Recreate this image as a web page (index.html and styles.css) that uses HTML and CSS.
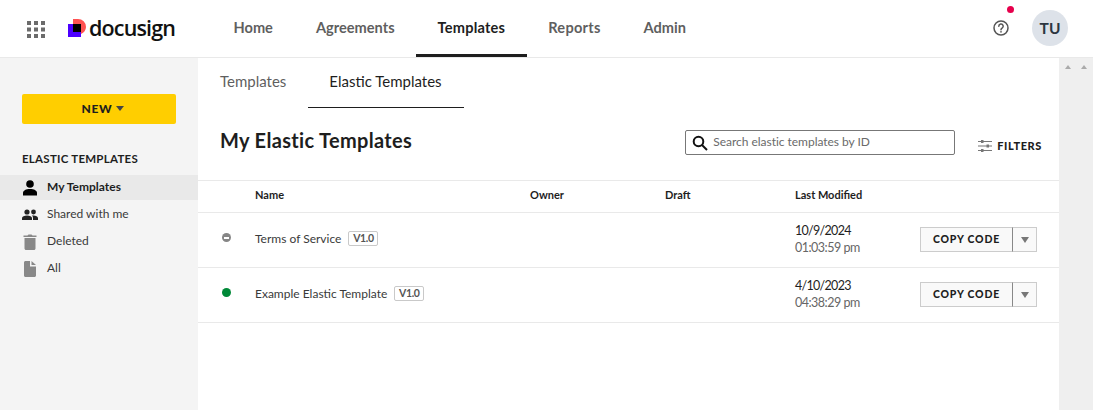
FILE: index.html
```html
<!DOCTYPE html>
<html lang="en">
<head>
<meta charset="utf-8">
<title>Elastic Templates</title>
<link rel="stylesheet" href="styles.css">
</head>
<body>
<header class="topbar">
  <svg class="apps" width="18" height="18" viewBox="0 0 18 18" fill="#6b6b6b"><rect x="0" y="1" width="4" height="4"/><rect x="7" y="1" width="4" height="4"/><rect x="14" y="1" width="4" height="4"/><rect x="0" y="7.500" width="4" height="4"/><rect x="7" y="7.500" width="4" height="4"/><rect x="14" y="7.500" width="4" height="4"/><rect x="0" y="14" width="4" height="4"/><rect x="7" y="14" width="4" height="4"/><rect x="14" y="14" width="4" height="4"/></svg>
  <div class="logo">
    <svg width="18" height="18" viewBox="0 0 18 18"><path d="M5 0h5a8 8 0 0 1 8 8 8 8 0 0 1-5 7V5H5z" fill="#ff5252"/><rect x="0" y="5" width="13" height="13" fill="#4c00ff"/><rect x="5" y="5" width="8" height="8" fill="#000"/></svg>
    <span class="wordmark">docusign</span>
  </div>
  <nav class="mainnav">
    <a class="navitem">Home</a>
    <a class="navitem">Agreements</a>
    <a class="navitem active">Templates</a>
    <a class="navitem wide">Reports</a>
    <a class="navitem">Admin</a>
  </nav>
  <div class="help">
    <svg width="18" height="18" viewBox="0 0 18 18" fill="none" stroke="#555" stroke-width="1.500"><circle cx="9" cy="9" r="7"/><path d="M6.800 7.200a2.200 2.200 0 1 1 3.300 1.900c-.8.500-1.100.9-1.100 1.700" stroke-linecap="round"/><circle cx="9" cy="12.800" r=".6" fill="#555" stroke-width=".6"/></svg>
    <span class="dot"></span>
  </div>
  <div class="avatar">TU</div>
</header>
<div class="body">
  <aside class="sidebar">
    <button class="newbtn">NEW <span class="caret"></span></button>
    <h2 class="sidehead">ELASTIC TEMPLATES</h2>
    <ul class="sidelist">
      <li class="sideitem current">
        <svg width="16" height="16" viewBox="0 0 16 16" fill="#000"><circle cx="8" cy="4" r="3.800"/><path d="M1 15.500v-2.500c0-2.500 3-4 7-4s7 1.500 7 4v2.500z"/></svg>
        My Templates
      </li>
      <li class="sideitem">
        <svg width="16" height="16" viewBox="0 0 16 16" fill="#222"><circle cx="5" cy="5" r="2.600"/><circle cx="11.500" cy="5" r="2.400"/><path d="M0 13v-1.800C0 9.500 2.300 8.500 5 8.500s5 1 5 2.700V13z"/><path d="M11 13v-2c0-1-.4-1.800-1.100-2.400.5-.1 1-.1 1.600-.1 2.400 0 4.500 1 4.500 2.700V13z"/></svg>
        Shared with me
      </li>
      <li class="sideitem">
        <svg width="16" height="16" viewBox="0 0 16 16" fill="#888"><path d="M1.500 1.500h4L6.500 .5h3l1 1h4V3h-13z"/><path d="M2.500 4h11v10.500c0 .8-.7 1.500-1.500 1.500H4c-.8 0-1.500-.7-1.500-1.500z"/></svg>
        Deleted
      </li>
      <li class="sideitem">
        <svg width="16" height="16" viewBox="0 0 16 16" fill="#888"><path d="M2 1.500C2 .7 2.700 0 3.500 0H8v5.500h6v9c0 .8-.7 1.500-1.500 1.500h-9C2.700 16 2 15.300 2 14.500z"/><path d="M9.500 0l4.500 4H9.500z"/></svg>
        All
      </li>
    </ul>
  </aside>
  <main class="content">
    <div class="tabs">
      <a class="tab">Templates</a>
      <a class="tab selected">Elastic Templates</a>
    </div>
    <div class="titlerow">
      <h1 class="title">My Elastic Templates</h1>
      <div class="search">
        <svg width="16" height="16" viewBox="0 0 16 16" fill="none" stroke="#111" stroke-width="2"><circle cx="6.500" cy="6.500" r="4.800"/><path d="M10 10l5 5"/></svg>
        <span class="placeholder">Search elastic templates by ID</span>
      </div>
      <div class="filters">
        <svg width="14" height="14" viewBox="0 0 14 14" fill="#777"><rect x="0" y="2" width="14" height="1"/><rect x="0" y="6.500" width="14" height="1"/><rect x="0" y="11" width="14" height="1"/><rect x="3" y="1" width="2.500" height="3"/><rect x="8.500" y="5.500" width="2.500" height="3"/><rect x="3" y="10" width="2.500" height="3"/></svg>
        FILTERS
      </div>
    </div>
    <div class="row headrow">
      <span class="cname">Name</span>
      <span class="cowner">Owner</span>
      <span class="cdraft">Draft</span>
      <span class="cmod">Last Modified</span>
    </div>
    <div class="row datarow">
      <span class="status paused"></span>
      <span class="cname"><span>Terms of Service</span><span class="ver">V1.0</span></span>
      <span class="cowner"></span>
      <span class="cdraft"></span>
      <span class="cmod"><span class="date">10/9/2024</span><span class="time">01:03:59 pm</span></span>
      <div class="split"><button class="copy">COPY CODE</button><button class="more"><span class="caret"></span></button></div>
    </div>
    <div class="row datarow">
      <span class="status live"></span>
      <span class="cname"><span>Example Elastic Template</span><span class="ver">V1.0</span></span>
      <span class="cowner"></span>
      <span class="cdraft"></span>
      <span class="cmod"><span class="date">4/10/2023</span><span class="time">04:38:29 pm</span></span>
      <div class="split"><button class="copy">COPY CODE</button><button class="more"><span class="caret"></span></button></div>
    </div>
  </main>
  <div class="rail"><span class="up"></span><span class="up"></span></div>
</div>
</body>
</html>
```
FILE: styles.css
```css
* { box-sizing: border-box; }
html, body { margin: 0; height: 100%; overflow: hidden; }
body { font-family: Lato, "Liberation Sans", sans-serif; color: #1e1e1e; background: #fff; }
button { font-family: inherit; }

.topbar { height: 58px; display: flex; align-items: center; border-bottom: 1px solid #e9e9e9; padding: 0 0 1px 27px; }
.apps { flex: none; margin-top: 1px; }
.logo { display: flex; align-items: center; margin-left: 23px; width: 144px; }
.wordmark { font-family: "Open Sans", sans-serif; font-size: 21.500px; font-weight: 600; letter-spacing: -.85px; color: #111; margin-left: 3px; line-height: 1; }
.mainnav { display: flex; height: 57px; margin-bottom: -1px; }
.navitem { display: flex; align-items: center; padding: 0 21.500px 3px; font-size: 14.600px; font-weight: 700; color: #5f5f5f; }
.navitem.active { color: #1e1e1e; letter-spacing: .2px; border-bottom: 3px solid #1e1e1e; padding-bottom: 0; }
.navitem.wide { letter-spacing: .25px; }
.help { position: relative; margin-left: auto; width: 18px; height: 18px; margin-right: 22px; }
.dot { position: absolute; top: -13px; left: 15px; width: 7px; height: 7px; border-radius: 50%; background: #e6004c; }
.avatar { width: 36px; height: 36px; margin-right: 25px; border-radius: 50%; background: #dde2e9; display: flex; align-items: center; justify-content: center; font-size: 15.500px; font-weight: 700; color: #2c3640; }

.body { display: flex; height: 352px; }
.sidebar { width: 198px; flex: none; background: #f4f4f4; padding-top: 36px; }
.newbtn { display: flex; align-items: center; justify-content: center; gap: 4px; width: 154px; height: 30px; margin: 0 0 0 22px; padding: 0 0 1px 8px; border: 0; border-radius: 2px; background: #ffce00; font-size: 12px; font-weight: 900; letter-spacing: .7px; color: #1e1e1e; }
.caret { display: inline-block; width: 0; height: 0; border-left: 3.500px solid transparent; border-right: 3.500px solid transparent; border-top: 5px solid #444; }
.newbtn .caret { border-left-width: 4px; border-right-width: 4px; }
.sidehead { margin: 27px 0 0 22px; font-size: 11.500px; font-weight: 700; line-height: 16px; letter-spacing: .25px; color: #1e1e1e; }
.sidelist { list-style: none; margin: 8px 0 0; padding: 0; }
.sideitem { display: flex; align-items: center; gap: 9px; height: 25px; margin-bottom: 2px; padding: 0 0 2px 22px; font-size: 12px; color: #3a3a3a; }
.sideitem svg { margin-top: 2px; }
.sideitem.current { background: #e9e9e9; font-weight: 700; color: #1e1e1e; }

.content { flex: 1; min-width: 0; }
.tabs { display: flex; height: 50px; padding-left: 22px; gap: 43px; }
.tab { display: flex; align-items: center; height: 50px; font-size: 15px; color: #5f5f5f; padding-bottom: 4px; }
.tab.selected { position: relative; color: #1e1e1e; }
.tab.selected::after { content: ""; position: absolute; left: -21.500px; right: -22px; bottom: 0; height: 1px; background: #1e1e1e; }
.titlerow { display: flex; height: 72px; align-items: flex-start; padding-left: 22px; }
.title { margin: 20px 0 0; font-size: 20px; line-height: 24px; font-weight: 700; letter-spacing: .33px; color: #1e1e1e; }
.search { display: flex; align-items: center; gap: 5px; width: 270px; height: 25px; margin: 22px 0 0 auto; padding: 0 0 0 6px; border: 1px solid #777; border-radius: 2px; }
.placeholder { font-size: 12px; line-height: 14px; letter-spacing: -.03px; padding-bottom: 1px; color: #6a6a6a; }
.filters { display: flex; align-items: center; gap: 5px; margin: 31px 17px 0 23px; font-size: 11px; font-weight: 900; letter-spacing: .6px; line-height: 14px; color: #1e1e1e; }

.row { display: flex; align-items: center; position: relative; padding-left: 57px; border-top: 1px solid #e9e9e9; font-size: 12px; }
.headrow { height: 32px; padding-bottom: 5px; font-size: 11px; font-weight: 700; color: #1e1e1e; }
.datarow { height: 55px; padding-bottom: 3px; color: #3a3a3a; }
.datarow:last-child { height: 56px; border-bottom: 1px solid #e9e9e9; }
.cname { width: 275px; display: flex; align-items: center; gap: 7px; }
.cowner { width: 135px; }
.cdraft { width: 130px; }
.cmod { display: flex; flex-direction: column; line-height: 17px; }
.date { font-size: 12.500px; letter-spacing: -.7px; color: #1e1e1e; }
.time { font-size: 12.500px; letter-spacing: -.5px; color: #666; }
.ver { display: block; border: 1px solid #c9c9c9; border-radius: 2px; height: 15px; width: 30px; text-align: center; font-size: 10.500px; font-weight: 700; letter-spacing: -.4px; line-height: 13px; color: #555; }
.status { position: absolute; left: 24px; top: 50%; width: 9px; height: 9px; margin-top: -7px; border-radius: 50%; }
.status.live { background: #008938; }
.status.paused { background: #868686; }
.status.paused::after { content: ""; display: block; width: 5px; height: 2px; margin: 3.500px 0 0 2px; background: #fff; }
.split { position: absolute; left: 722px; top: 14px; display: flex; height: 25px; }
.copy { width: 92px; height: 25px; padding: 0 0 2px; border: 1px solid #ccc; border-right: 0; background: #f9f9f9; font-size: 10.500px; font-weight: 900; letter-spacing: .8px; color: #1e1e1e; }
.more { display: flex; align-items: center; justify-content: center; width: 25px; height: 25px; padding: 0; border: 1px solid #ccc; border-left: 1px solid #888; background: #f9f9f9; }
.more .caret { border-left-width: 4px; border-right-width: 4px; border-top-width: 6px; border-top-color: #777; }

.rail { width: 34px; flex: none; background: #efefef; display: flex; justify-content: center; gap: 10px; padding-top: 7px; }
.up { width: 0; height: 0; border-left: 3.500px solid transparent; border-right: 3.500px solid transparent; border-bottom: 4px solid #aaa; }
```
